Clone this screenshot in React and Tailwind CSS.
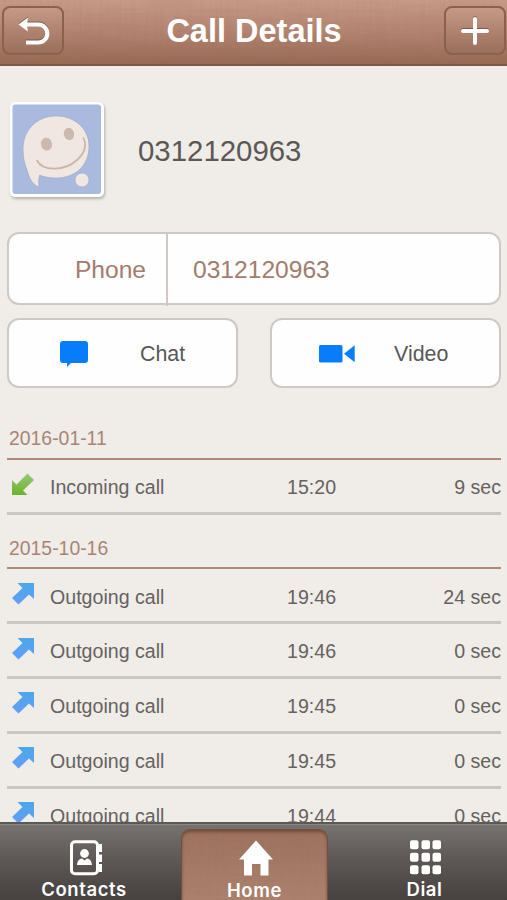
import React from 'react';

const sections = [
  {
    date: '2016-01-11',
    calls: [{ type: 'incoming', time: '15:20', duration: '9 sec' }],
  },
  {
    date: '2015-10-16',
    calls: [
      { type: 'outgoing', time: '19:46', duration: '24 sec' },
      { type: 'outgoing', time: '19:46', duration: '0 sec' },
      { type: 'outgoing', time: '19:45', duration: '0 sec' },
      { type: 'outgoing', time: '19:45', duration: '0 sec' },
      { type: 'outgoing', time: '19:44', duration: '0 sec' },
    ],
  },
];

// Woven cloth grain laid over the copper surfaces
const Linen = ({ id }) => (
  <svg className="pointer-events-none absolute inset-0 h-full w-full opacity-12" aria-hidden="true">
    <filter id={`${id}-h`}>
      <feTurbulence type="fractalNoise" baseFrequency="0.02 0.3" numOctaves="2" seed="4" />
      <feColorMatrix values="0 0 0 0 0.25  0 0 0 0 0.13  0 0 0 0 0.08  1.6 0 0 0 -0.6" />
    </filter>
    <filter id={`${id}-v`}>
      <feTurbulence type="fractalNoise" baseFrequency="0.3 0.02" numOctaves="2" seed="9" />
      <feColorMatrix values="0 0 0 0 0.25  0 0 0 0 0.13  0 0 0 0 0.08  1.6 0 0 0 -0.6" />
    </filter>
    <rect width="100%" height="100%" filter={`url(#${id}-h)`} />
    <rect width="100%" height="100%" filter={`url(#${id}-v)`} />
  </svg>
);

const HeaderButton = ({ label, children }) => (
  <button
    aria-label={label}
    className="relative flex h-[49px] w-[62px] items-center justify-center rounded-[8px] border-2 border-[#8d5f4d] bg-linear-to-b from-[#c39a87] via-[#b08370] to-[#99705c]"
  >
    {children}
  </button>
);

const Header = () => (
  <header className="relative h-[66px] shrink-0 border-b-2 border-[#7f5845] bg-linear-to-b from-[#c79b87] via-[#b38471] to-[#976a54]">
    <Linen id="header" />
    <div className="relative flex justify-between pt-[6px] pr-[1px] pl-[2px]">
      <HeaderButton label="Back">
        <svg width="34" height="32" viewBox="0 0 34 32" className="ml-[2px] drop-shadow-[0_-1px_0_rgba(70,50,45,0.5)]">
          <path d="M9 9.500H21.300A8.700 8.700 0 0 1 21.300 27.500H9" fill="none" stroke="#fff" strokeWidth="4.200" />
          <path d="M1.500 9.500L11 2.500L10 9.500L11 16.500Z" fill="#fff" />
        </svg>
      </HeaderButton>
      <h1 className="pt-[1px] text-[32.5px] leading-[48px] font-bold text-white">Call Details</h1>
      <HeaderButton label="Add">
        <svg width="28" height="28" viewBox="0 0 28 28" className="drop-shadow-[0_-1px_0_rgba(70,50,45,0.5)]">
          <path d="M14 2V26M2 14H26" stroke="#fff" strokeWidth="4" strokeLinecap="round" />
        </svg>
      </HeaderButton>
    </div>
  </header>
);

const Avatar = () => (
  <svg
    width="94"
    height="95"
    viewBox="0 0 94 95"
    className="rounded-[5px] shadow-[1px_2px_3px_rgba(0,0,0,0.25)]"
  >
    <rect width="94" height="95" rx="5" fill="#fdfdff" />
    <rect x="2.5" y="2.5" width="88.500" height="89.500" rx="3" fill="#a9bade" />
    <g fill="#f0e7e3" stroke="#9aa5c5" strokeWidth="0.6">
      <path d="M46 14C65 14 79 27 79 44C79 64 65 76 46 76C39 76 34 75 29.500 73Q28 79 29 85C21 82 19 74 17 68C14 61 13 53 13 47C13 28 27 14 46 14Z" />
      <circle cx="72" cy="78" r="7" />
    </g>
    <ellipse cx="36.500" cy="42" rx="5.500" ry="6.500" fill="#cbb8ae" transform="rotate(-12 37 42)" />
    <ellipse cx="59" cy="32" rx="5.200" ry="6.200" fill="#cbb8ae" transform="rotate(-12 59 32)" />
    <path
      d="M27 58.500C33 70 55 69 67 58C75 51 77 44 73.500 36"
      fill="none"
      stroke="#cbb5aa"
      strokeWidth="1.700"
      strokeLinecap="round"
    />
  </svg>
);

const ActionButton = ({ children }) => (
  <button className="flex h-[70px] w-[231px] items-center rounded-[12px] border-2 border-[#cfc9c5] bg-[#fefefe] text-[21.4px] text-[#595757]">
    {children}
  </button>
);

const CallArrow = ({ type }) => (
  <svg width="24" height="24" viewBox="0 0 24 24" className="mb-[3px] w-[24px] shrink-0">
    <defs>
      <linearGradient id="arrow-in" x1="0" y1="0" x2="0" y2="1">
        <stop offset="0" stopColor="#98c877" />
        <stop offset="1" stopColor="#69b32a" />
      </linearGradient>
      <linearGradient id="arrow-out" x1="0" y1="0" x2="0" y2="1">
        <stop offset="0" stopColor="#4ba8e6" />
        <stop offset="1" stopColor="#639dfa" />
      </linearGradient>
    </defs>
    {type === 'incoming' ? (
      <path d="M1 8L5.500 12.500L16.500 1.500L23 8L12 18.500L16.500 23H1Z" fill="url(#arrow-in)" />
    ) : (
      <path d="M6.500 1H23V17L18 12.500L7.500 22.500L1 16L11.500 6Z" fill="url(#arrow-out)" />
    )}
  </svg>
);

const CallRow = ({ call }) => (
  <li className="flex h-[54.8px] items-center border-b-3 border-[#cbc6c3] text-[19.6px] text-[#656260]">
    <div className="flex w-[43px] pl-[4px]">
      <CallArrow type={call.type} />
    </div>
    <span className="w-[237px] pt-[4px]">{call.type === 'incoming' ? 'Incoming call' : 'Outgoing call'}</span>
    <span className="pt-[4px]">{call.time}</span>
    <span className="ml-auto pt-[4px]">{call.duration}</span>
  </li>
);

const Tab = ({ label, children }) => (
  <div className="flex w-[148px] flex-col items-center pt-[15px] text-white">
    <div className="flex h-[39px] items-start">{children}</div>
    <span className="relative font-['Inter'] text-[18.5px] leading-[22px] font-semibold tracking-[0.6px]">{label}</span>
  </div>
);

const TabBar = () => (
  <nav className="relative h-[78px] shrink-0 border-t-2 border-[#5c5856] bg-linear-to-b from-[#777371] via-[#5c5754] to-[#46403e]">
    <div className="flex h-full border-t border-[#8b8784]">
      <div className="flex w-[181px] justify-center pr-[13px]">
        <Tab label="Contacts">
          <svg width="34" height="36" viewBox="0 0 34 36" className="ml-[4px]">
            <rect x="2.500" y="1.800" width="26" height="32" rx="3.500" fill="none" stroke="#fff" strokeWidth="3" />
            <circle cx="15.500" cy="13.500" r="4.400" fill="#fff" />
            <path d="M8 25C8.300 20.500 10.500 19 13 18.500L15.500 20.500L18 18.500C20.500 19 22.700 20.500 23 25Z" fill="#fff" />
            <path d="M30 4H33V12H30ZM30 14.500H33V22H30ZM30 24H33V32H30Z" fill="#fff" />
          </svg>
        </Tab>
      </div>
      <div className="relative mt-[4px] flex w-[147px] justify-center overflow-hidden rounded-t-[9px] border border-b-0 border-[#745040] bg-linear-to-b from-[#9e725f] to-[#ad8370] shadow-[inset_0_2px_3px_rgba(70,35,20,0.5)]">
        <Linen id="tab" />
        <div className="relative -mt-[5px]">
          <Tab label="Home">
            <svg width="34" height="36" viewBox="0 0 34 36" className="ml-[3px]">
              <path d="M17 .5L34 19.500H29.500V35.500H21.500V24H13V35.500H5V19.500H0Z" fill="#fff" />
            </svg>
          </Tab>
        </div>
      </div>
      <div className="flex w-[179px] justify-center pl-[14px]">
        <Tab label="Dial">
          <svg width="31" height="35" viewBox="0 0 31 35" fill="#fff" className="ml-[2px]">
            {[0, 12.5, 25].map((y) =>
              [0, 11.5, 22.5].map((x) => <rect key={`${x}-${y}`} x={x} y={y + 0.3} width="8.500" height="9" rx="2" />)
            )}
          </svg>
        </Tab>
      </div>
    </div>
  </nav>
);

const App = () => (
  <div className="flex h-[900px] w-[507px] flex-col overflow-hidden bg-[#f0ede9] font-['Liberation_Sans',Arial,sans-serif]">
    <Header />

    <main className="min-h-0 flex-1 overflow-hidden pr-[6px] pl-[7px]">
      {/* Contact */}
      <div className="flex items-center pt-[36px] pl-[3px]">
        <Avatar />
        <span className="ml-[34px] pt-[4px] text-[29.4px] text-[#5b5856]">0312120963</span>
      </div>

      {/* Phone */}
      <div className="mt-[35px] flex h-[73px] w-[494px] rounded-[12px] border-2 border-[#cfc9c5] bg-[#fefefe] text-[24.6px] text-[#a27c6d]">
        <div className="-mb-[3px] w-[159px] border-r-2 border-[#cfc9c5] pr-[20px] text-right leading-[71px]">Phone</div>
        <div className="pl-[25px] leading-[71px]">0312120963</div>
      </div>

      <div className="mt-[13px] flex w-[494px] justify-between">
        <ActionButton>
          <svg width="28" height="26" viewBox="0 0 28 26" className="mt-[2px] ml-[51px]">
            <path d="M3 0H25Q28 0 28 3V19Q28 22 25 22H11L7 26V22H3Q0 22 0 19V3Q0 0 3 0Z" fill="#087dfb" />
          </svg>
          <span className="mt-[2px] ml-[52px]">Chat</span>
        </ActionButton>
        <ActionButton>
          <svg width="36" height="18" viewBox="0 0 36 18" className="mt-[1px] ml-[47px]">
            <rect width="23.500" height="17.500" rx="1.500" fill="#087dfb" />
            <path d="M25 8.700L35.700 .3V17.300Z" fill="#087dfb" />
          </svg>
          <span className="mt-[2px] ml-[39px]">Video</span>
        </ActionButton>
      </div>

      {/* Call log */}
      <div className="pt-[17px]">
        {sections.map((section) => (
          <section key={section.date}>
            <h2 className="h-[54.8px] border-b-2 border-[#b1897a] pt-[17px] pl-[2px] text-[19.4px] leading-[32px] text-[#a98476]">
              {section.date}
            </h2>
            <ul>
              {section.calls.map((call, index) => (
                <CallRow key={index} call={call} />
              ))}
            </ul>
          </section>
        ))}
      </div>
    </main>

    <TabBar />
  </div>
);

export default App;
